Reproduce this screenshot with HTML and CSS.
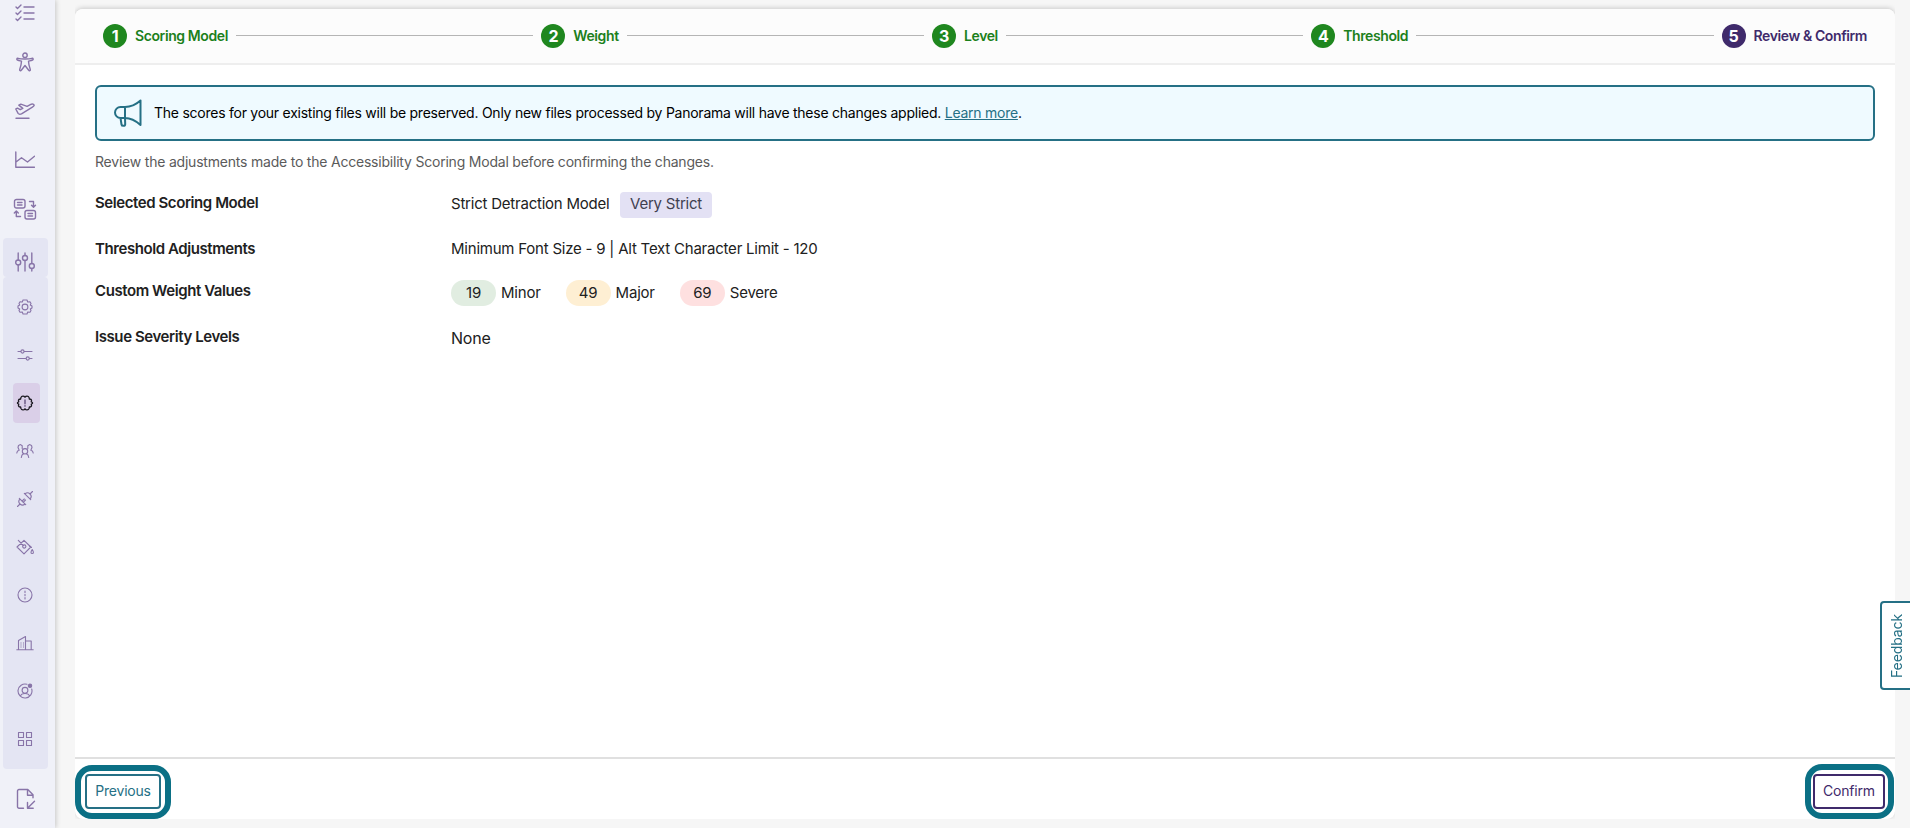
FILE: index.html
```
<!DOCTYPE html>
<html lang="en">
<head>
    <meta charset="UTF-8">
    <meta name="viewport" content="width=device-width, initial-scale=1.0">
    <title>Accessibility Scoring Model</title>
    <link rel="stylesheet" href="styles.css">
</head>
<body>
    <nav class="sidebar">
        <ul class="nav-main">
            <li><svg width="20" height="20" viewBox="0 0 20 20"><path d="M1 4l1.500 1.500L6 2M1 10l1.500 1.500L6 8M1 16l1.500 1.500L6 14M9 4h10M9 10h10M9 16h10"/></svg></li>
            <li><svg width="20" height="20" viewBox="0 0 20 20"><circle cx="10" cy="3.200" r="2.200"/><path d="M3 6.300c2 .6 4.500.7 7 .7s5-.1 7-.7c1.200-.3 1.700 1.300.5 1.700-1.500.6-3 .9-4 1.200.1 2.500.8 5.500 1.800 8.300.4 1.100-1 1.700-1.600.7L10 13.500 6.300 18.200c-.6 1-2 .4-1.600-.7 1-2.800 1.700-5.800 1.800-8.300-1-.3-2.500-.6-4-1.200C1.300 7.600 1.800 6 3 6.300z"/></svg></li>
            <li><svg width="20" height="20" viewBox="0 0 20 20"><path d="M1 17.300h13M.8 8l1.700-.8 2.700 1.500 2.600-1.300-4-3.300 2-.9 6.300 2.100 3.700-1.900c1.500-.7 3.200-.2 3.300.8.100.8-.8 1.500-1.700 2L6.500 12.800c-1.400.6-2.500.6-3.400-.4z"/></svg></li>
            <li><svg width="20" height="20" viewBox="0 0 20 20"><path d="M.8 2v15.300h18.700M1 12l5.500-4.300 6 4.300 7-5.700"/></svg></li>
            <li><svg width="24" height="22" viewBox="0 0 24 22"><rect x="1.500" y="1.500" width="10.500" height="8.500" rx="2"/><path d="M4.500 4.500H9M4.500 7H9M16.500 3.500h4V9M18.500 7.200l2 2 2-2M7.500 18.500H3.300V13M1.300 15l2-2 2 2"/><rect x="12" y="12.500" width="10.500" height="8.500" rx="2"/><path d="M15 15.500h4.500M15 18h4.500"/></svg></li>
        </ul>
        <div class="nav-parent"><svg width="20" height="20" viewBox="0 0 20 20"><path d="M3.200 1v7M3.200 13v6M10 1v2.500M10 8.500V19M16.800 1v10.500M16.800 16.500V19"/><circle cx="3.200" cy="10.500" r="2.500"/><circle cx="10" cy="6" r="2.500"/><circle cx="16.800" cy="14" r="2.500"/></svg></div>
        <ul class="nav-sub">
            <li><svg width="16" height="16" viewBox="0 0 16 16"><path d="M6 1h4l.7 2 2.300-.2 1 1.700-.7 1.500L15 7v2l-1.700 1 .7 1.500-1 1.700-2.300-.2L10 15H6l-.7-2-2.300.2-1-1.700.7-1.500L1 9V7l1.700-1L2 4.500l1-1.700 2.300.2z"/><circle cx="8" cy="8" r="2.900"/></svg></li>
            <li><svg width="16" height="16" viewBox="0 0 16 16"><path d="M1 4.500h2.800M7.200 4.500H15M1 11.500h8M12.400 11.500H15"/><circle cx="5.500" cy="4.500" r="1.600"/><circle cx="10.700" cy="11.500" r="1.600"/></svg></li>
            <li class="active"><svg width="18" height="16" viewBox="0 0 18 16"><path d="M9 2.200C8 .6 5.600.6 4.900 2.600L4.600 4C2.500 4 2 5.300 2.800 6.800.9 7.300.9 8.700 2.800 9.200 2 10.700 2.500 12 4.600 12l.3 1.400C5.600 15.400 8 15.400 9 13.800c1 1.600 3.400 1.600 4.100-.4l.3-1.400c2.100 0 2.600-1.300 1.800-2.800 1.900-.5 1.900-1.900 0-2.400C16 5.300 15.500 4 13.400 4l-.3-1.400C12.400.6 10 .6 9 2.200z"/><path class="mark" d="M9 5v3.800M9 10.600v.6"/></svg></li>
            <li><svg width="18" height="16" viewBox="0 0 18 16"><circle cx="9" cy="8.300" r="2.700"/><path d="M5.300 14.500c.1-2 1.200-3.200 2.300-3.700M12.700 14.500c-.1-2-1.200-3.200-2.300-3.700M6.200 5.500V2.800L4.500 1.600 2.500 2.400 2 4.500l1 2.300M3.200 7.200C1.800 7.500.9 8.500.8 10M11.800 5.500V2.800l1.700-1.200 2 .8.500 2.100-1 2.300M14.800 7.200c1.400.3 2.300 1.300 2.400 2.800"/></svg></li>
            <li><svg width="16" height="16" viewBox="0 0 16 16"><path d="M.5 15.500L3 13M2.300 7.300l6.400 6.400M3 8c-1.600 1.600-1.500 3.500 0 5s3.400 1.600 5 0M5 10.200L7.300 8M6.200 11.400L8.500 9M15.500.5L13 3M7.300 2.300l6.400 6.400M8 3c1.600-1.600 3.500-1.500 5 0s1.600 3.400 0 5"/></svg></li>
            <li><svg width="18" height="16" viewBox="0 0 18 16"><path d="M1 8l7-6.700L14.800 8 8 14.800zM2.300 1.300l5 5.200"/><circle cx="8.300" cy="7.500" r="1.600"/><path d="M16.200 10.500c1.600 2.500 1.600 4 0 4s-1.600-1.500 0-4zM13.500 7l2 1.500"/></svg></li>
            <li><svg width="16" height="16" viewBox="0 0 16 16"><circle cx="8" cy="8" r="7"/><path d="M8 4v1.400M8 7.300v1.400M8 10.600V12"/></svg></li>
            <li><svg width="18" height="16" viewBox="0 0 18 16"><path d="M.8 14.800h16.400M2.500 14.800V5.500l7-4v13.300M9.500 6h5.700v8.800"/><path class="dots" d="M5 7.500v5M7.500 7.500v5"/></svg></li>
            <li><svg width="16" height="16" viewBox="0 0 16 16"><path d="M10 1.300A7 7 0 1 0 14.700 6M3.500 13.200c.5-2 2.200-2.700 4.500-2.700s4 .7 4.500 2.700"/><circle cx="8" cy="7.300" r="2.900"/><circle class="solid" cx="13" cy="2.800" r="1.700"/></svg></li>
            <li><svg width="16" height="16" viewBox="0 0 16 16"><path d="M1.500 1.500h5v5h-5zM9.500 1.500h5v5h-5zM1.500 9.500h5v5h-5zM9.500 9.500h5v5h-5z"/></svg></li>
        </ul>
        <div class="nav-last"><svg width="20" height="22" viewBox="0 0 20 22"><path d="M7.500 20.200H3a1.500 1.500 0 0 1-1.500-1.500V3A1.500 1.500 0 0 1 3 1.500h8.800L17 6.700v3M11.500 1.800v5.500h5.300M18.500 13.300l-6.500 6.500M11.500 14.500v5.700h5.700"/></svg></div>
    </nav>

    <main class="card">
        <header class="stepper">
            <div class="step"><span class="num">1</span><span>Scoring Model</span></div>
            <div class="line"></div>
            <div class="step"><span class="num">2</span><span>Weight</span></div>
            <div class="line"></div>
            <div class="step"><span class="num">3</span><span>Level</span></div>
            <div class="line"></div>
            <div class="step"><span class="num">4</span><span>Threshold</span></div>
            <div class="line"></div>
            <div class="step current"><span class="num">5</span><span>Review &amp; Confirm</span></div>
        </header>

        <section class="content">
            <div class="notice">
                <svg width="30" height="28" viewBox="0 0 30 28"><path d="M12 8H7.500a5.500 5.500 0 0 0 0 11H12zM12 8c6 0 10.500-2 15.500-6.500v24.500C22.500 21.500 18 19 12 19M7.500 19l1 6.500c.3 1.800 3.700 1.800 3.700-.3L12 19"/></svg>
                <p>The scores for your existing files will be preserved. Only new files processed by Panorama will have these changes applied. <a href="#">Learn more</a>.</p>
            </div>
            <p class="intro">Review the adjustments made to the Accessibility Scoring Modal before confirming the changes.</p>

            <dl class="summary">
                <dt>Selected Scoring Model</dt>
                <dd class="model">Strict Detraction Model <span class="badge">Very Strict</span></dd>
                <dt>Threshold Adjustments</dt>
                <dd>Minimum Font Size - 9 | Alt Text Character Limit - 120</dd>
                <dt>Custom Weight Values</dt>
                <dd class="weights">
                    <span class="weight"><span class="pill minor">19</span>Minor</span>
                    <span class="weight"><span class="pill major">49</span>Major</span>
                    <span class="weight"><span class="pill severe">69</span>Severe</span>
                </dd>
                <dt>Issue Severity Levels</dt>
                <dd class="none">None</dd>
            </dl>
        </section>

        <footer class="actions">
            <div class="ring"><button class="btn">Previous</button></div>
            <div class="ring ring-confirm"><button class="btn confirm">Confirm</button></div>
        </footer>
    </main>

    <button class="feedback">Feedback</button>
</body>
</html>
```
FILE: styles.css
```
* {
    box-sizing: border-box;
}
body {
    margin: 0;
    height: 828px;
    display: flex;
    overflow: hidden;
    background: #f6f6f6;
    font-family: Inter, "Liberation Sans", sans-serif;
    font-size: 15px;
    letter-spacing: -0.22px;
    color: #212121;
}
ul {
    list-style: none;
    margin: 0;
    padding: 0;
}
p {
    margin: 0;
}
svg {
    display: block;
    fill: none;
    stroke: currentColor;
    stroke-width: 1.4;
    stroke-linecap: round;
    stroke-linejoin: round;
}

/* Sidebar */
.sidebar {
    width: 55px;
    flex: none;
    padding: 0 7px 0 3px;
    background: #f0f1f8;
    color: #8874a8;
    box-shadow: 1px 0 5px rgba(0, 0, 0, 0.2);
}
.nav-main {
    margin-top: -12px;
}
.nav-main li,
.nav-sub li,
.nav-parent,
.nav-last {
    display: flex;
    align-items: center;
    justify-content: center;
}
.nav-main li {
    height: 49px;
    padding-right: 1px;
}
.nav-parent {
    height: 39px;
    margin-top: 5px;
    padding: 9px 1px 0 0;
    background: #e4e5f3;
    border-radius: 4px;
}
.nav-sub {
    height: 492px;
    padding-top: 10px;
    background: #e4e5f3;
    border-radius: 4px;
}
.nav-sub li {
    width: 27px;
    height: 40px;
    margin: 0 0 8px 10px;
    padding-right: 3px;
}
.nav-sub svg {
    flex: none;
    stroke-width: 1.1;
}
.nav-sub .active {
    background: #dacfe8;
    border-radius: 4px;
    color: #1c1a22;
}
.nav-sub .active svg {
    stroke-width: 1.3;
}
.nav-sub .mark {
    stroke: #5d4a78;
}
.nav-sub .dots {
    stroke-dasharray: 1 1;
    stroke-linecap: butt;
}
.nav-sub .solid {
    fill: currentColor;
}
.nav-last {
    height: 60px;
}

/* Card */
.card {
    flex: 1;
    height: 810px;
    margin: 9px 15px 0 20px;
    display: flex;
    flex-direction: column;
    background: #fff;
    border-radius: 8px;
    box-shadow: 0 -1px 5px rgba(0, 0, 0, 0.18);
    clip-path: inset(-9px 0 0 0);
}
.stepper {
    height: 56px;
    flex: none;
    display: flex;
    align-items: center;
    gap: 8px;
    padding: 0 28px 1px;
    background: #fcfcfc;
    border-bottom: 2px solid #eee;
    border-radius: 8px 8px 0 0;
}
.step {
    display: flex;
    align-items: center;
    gap: 8px;
    color: #1b801b;
    font-size: 14px;
    font-weight: 600;
    letter-spacing: -0.4px;
}
.step.current {
    color: #3f2a6b;
}
.num {
    width: 24px;
    height: 24px;
    border-radius: 50%;
    background: #1f871f;
    color: #fff;
    font-size: 16px;
    font-weight: 700;
    line-height: 25px;
    text-align: center;
}
.current .num {
    background: #3f2a6b;
}
.line {
    flex: 1;
    height: 1px;
    background: #b5b5b5;
}

.content {
    flex: 1;
    padding: 20px;
}
.notice {
    height: 56px;
    display: flex;
    align-items: center;
    gap: 11px;
    padding-left: 16px;
    border: 2px solid #257085;
    border-radius: 6px;
    background: #effaff;
    color: #000;
    font-size: 14px;
    letter-spacing: -0.25px;
}
.notice p {
    padding-bottom: 1px;
}
.notice svg {
    color: #257085;
    stroke-width: 2;
}
.notice a {
    color: #257085;
}
.intro {
    margin-top: 12px;
    font-size: 14px;
    line-height: 17px;
    letter-spacing: -0.21px;
    color: #5b5b5b;
}
.summary {
    display: grid;
    grid-template-columns: 356px 1fr;
    grid-template-rows: 46px 42px 46px 40px;
    margin: 22px 0 0;
    line-height: 20px;
}
.summary dt {
    padding-top: 1px;
    font-weight: 600;
    letter-spacing: -0.42px;
}
.summary dd {
    margin: 0;
    padding-top: 1px;
}
.summary .model,
.summary .weights {
    display: flex;
    align-items: flex-start;
    padding: 0;
    line-height: 24px;
}
.summary .none {
    padding-top: 2px;
    font-size: 16px;
}
.badge {
    height: 26px;
    margin-left: 10.5px;
    padding: 0 10px;
    border-radius: 4px;
    background: #e3e1f4;
    color: #404050;
}
.weights {
    gap: 25px;
}
.weight {
    display: flex;
    gap: 5px;
    line-height: 26px;
}
.pill {
    width: 45px;
    height: 26px;
    border-radius: 13px;
    text-align: center;
}
.minor {
    background: #e1ede1;
}
.major {
    background: #feefd3;
}
.severe {
    background: #fee0e0;
}

/* Footer */
.actions {
    height: 62px;
    display: flex;
    justify-content: space-between;
    align-items: flex-start;
    padding-top: 6px;
    padding-right: 1px;
    border-top: 2px solid #e0e0e0;
}
.ring {
    padding: 3px 4px 4px;
    border: 6px solid #0b7085;
    border-radius: 17px;
}
.ring-confirm {
    margin-top: -1px;
    padding: 4px 3px 4px 2px;
}
.btn {
    display: block;
    height: 35px;
    width: 76px;
    padding: 0 0 2px;
    border: 2px solid #257085;
    border-radius: 4px;
    background: #fff;
    color: #257085;
    font: 14px Inter, "Liberation Sans", sans-serif;
    letter-spacing: -0.2px;
}
.btn.confirm {
    width: 72px;
    border-color: #3f2a6b;
    color: #3f2a6b;
}

/* Tab fixed to the right edge */
.feedback {
    position: fixed;
    top: 601px;
    right: -2px;
    width: 32px;
    height: 89px;
    padding: 0 2px 0 0;
    border: 2px solid #257085;
    border-radius: 0 4px 4px 0;
    background: #fff;
    color: #257085;
    font: 14px Inter, "Liberation Sans", sans-serif;
    letter-spacing: -0.1px;
    writing-mode: vertical-rl;
    transform: rotate(180deg);
}
```
